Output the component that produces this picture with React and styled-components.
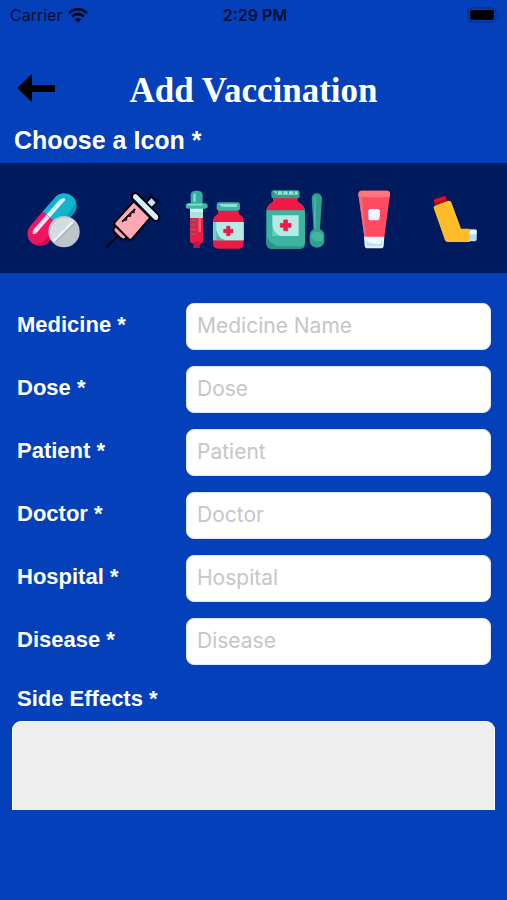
import React from "react";
import styled, { createGlobalStyle } from "styled-components";

const GlobalStyle = createGlobalStyle`
  *, *::before, *::after { box-sizing: border-box; }
  body { margin: 0; background: #0340b9; }
`;

const Screen = styled.div`
  min-height: 100vh;
  background: #0340b9;
  color: #fff;
  font-family: "Liberation Sans", Arial, sans-serif;
`;

const StatusBar = styled.div`
  display: grid;
  grid-template-columns: 1fr auto 1fr;
  align-items: center;
  height: 30px;
  padding: 0 7px 0 10px;
  color: #001036;
  font: 400 16px/20px Inter, sans-serif;
`;

const Carrier = styled.span`
  display: flex;
  align-items: center;
  gap: 6px;
`;

const Clock = styled.time`
  font-weight: 600;
  font-size: 16px;
`;

const BatteryIcon = styled.svg`
  justify-self: end;
`;

const Header = styled.header`
  display: grid;
  grid-template-columns: 48px 1fr 48px;
  align-items: center;
  height: 60px;
  margin: 28px 0 2px;
  padding: 0 12px;
`;

const BackButton = styled.button`
  display: flex;
  justify-content: center;
  align-items: center;
  height: 44px;
  padding: 0;
  border: 0;
  background: none;
  cursor: pointer;
`;

const Title = styled.h1`
  margin: 0;
  padding-top: 6px;
  text-align: center;
  white-space: nowrap;
  font: 700 35px/40px "Liberation Serif", serif;
`;

const SectionTitle = styled.h2`
  margin: 0;
  padding: 4px 14px 7px;
  font-weight: 700;
  font-size: 25px;
  line-height: 32px;
`;

const IconStrip = styled.div`
  display: grid;
  grid-template-columns: repeat(6, 1fr);
  height: 110px;
  padding: 0 13px;
  background: #001a5e;
`;

const IconButton = styled.button`
  display: flex;
  align-items: center;
  justify-content: center;
  padding: 0;
  border: 0;
  background: none;
  cursor: pointer;

  svg {
    width: 60px;
    height: 60px;
    overflow: visible;
  }
`;

const Form = styled.form`
  display: flex;
  flex-direction: column;
  gap: 16px;
  padding: 30px 16px 0;
`;

const Field = styled.div`
  display: grid;
  grid-template-columns: 1fr 305px;
  align-items: center;
`;

const Label = styled.label`
  padding: 0 0 4px 1px;
  font-weight: 700;
  font-size: 22px;
  line-height: 28px;
`;

const TextInput = styled.input`
  width: 100%;
  height: 47px;
  padding: 0 10px 2px;
  border: 1px solid #dfe6f5;
  border-radius: 8px;
  background: #fff;
  color: #111;
  font: 400 21px/28px Inter, sans-serif;

  &::placeholder { color: #c6c6c8; opacity: 1; }
`;

const Notes = styled.div`
  display: flex;
  flex-direction: column;
  gap: 4px;
  margin: 4px -4px 0;

  label { padding-left: 5px; }
`;

const TextArea = styled.textarea`
  display: block;
  width: 100%;
  height: 89px;
  padding: 10px;
  border: 1px solid #fff;
  border-bottom: 0;
  border-radius: 9px 9px 0 0;
  background: #eee;
  color: #111;
  font: 400 21px/28px Inter, sans-serif;
  resize: none;
`;

const Wifi = () => (
  <svg width="20" height="15" viewBox="0 0 60 45" fill="none" stroke="#000a22" strokeWidth="8" aria-hidden="true">
    <path d="M3 15Q30-8 57 15" />
    <path d="M12 26Q30 10 48 26" />
    <path d="M20 34Q30 26 40 34L30 44Z" fill="#000a22" stroke="none" />
  </svg>
);

const Battery = () => (
  <BatteryIcon width="33" height="16" viewBox="0 0 33 16" role="img" aria-label="Battery full">
    <rect x="1" y="1" width="28" height="14" rx="4" fill="none" stroke="#022d83" strokeWidth="1" />
    <rect x="3" y="3" width="24" height="10" rx="2" fill="#000" />
    <path d="M31 6q2 2 0 4z" fill="#022d83" />
  </BatteryIcon>
);

const Arrow = () => (
  <svg width="38" height="28" viewBox="0 0 38 28" aria-hidden="true">
    <path d="M0 14 15 0V11H38V18H15V28Z" fill="#000" />
  </svg>
);

const Pills = () => (
  <svg viewBox="39 24 180 180" aria-hidden="true">
    <g transform="translate(126 119) rotate(41) scale(1.12)">
      <path d="M-33 0V-50A33 33 0 0 1 33-50V0Z" fill="#11b4cd" />
      <path d="M-33 0V50A33 33 0 0 0 33 50V0Z" fill="#ef1561" />
      <path d="M16-78A33 33 0 0 1 33-50V0H22V-48Q22-66 16-78Z" fill="#079bb9" />
      <path d="M22 0H33V50A33 33 0 0 1 0 83Q22 73 22 50Z" fill="#c90d55" />
      <path d="M-20-1V-49Q-19-61-12-65Q-7-67-8-56V-1Z" fill="#d8faff" />
      <path d="M-20 0H-8V53Q-10 64-15 62Q-20 59-20 50Z" fill="#ffd8e7" />
    </g>
    <circle cx="162" cy="155" r="47" fill="#bcc5cc" />
    <path d="M130 187A46 46 0 0 1 194 122Z" fill="#d5dce0" />
    <path d="M133 181 187 127" stroke="#f3f6f7" strokeWidth="6" strokeLinecap="round" />
    <path d="M138 185 193 131" stroke="#9caab4" strokeWidth="3" />
  </svg>
);

const Syringe = () => (
  <svg viewBox="279 24 180 180" stroke="#02040c" strokeWidth="6" strokeLinejoin="round" strokeLinecap="round" aria-hidden="true">
    <path d="M290 201 323 167" fill="none" />
    <path d="M311 145q7-9 15-2l20 20q7 8-1 14-8 4-14-3l-17-17q-6-6-3-12Z" fill="#ff9daf" />
    <path d="m371 64 50 49-56 65q-4 3-8 0l-43-43q-3-4 0-8Z" fill="#ffa9b6" />
    <path d="M407 69 424 50 441 68 424 85Z" fill="#c5e4fa" />
    <path d="M418 39 454 72" strokeWidth="3" />
    <path d="M369 42q8-6 15 1l61 61q7 8 0 16-8 7-15 0l-62-63q-6-7 1-15Z" fill="#d8effd" />
    <path d="M375 88 337 125" fill="none" strokeWidth="4" />
    <path d="M373 88V99L363 97 362 110 351 108 350 121 338 122Z" strokeWidth="2" fill="#2b1724" />
  </svg>
);

const Cross = ({ x, y, size }) => (
  <g transform={`translate(${x} ${y}) scale(${size})`}>
    <path d="M-5-14H5V-5H14V5H5V14H-5V5H-14V-5H-5Z" fill="#ef1945" stroke="#ef1945" strokeWidth="2" strokeLinejoin="round" />
  </g>
);

const DropperBottle = () => (
  <svg viewBox="39 24 180 180" aria-hidden="true">
    <path d="M62 72V46Q62 33 75 32H84Q98 33 98 46V72Z" fill="#35ad9f" />
    <path d="M70 65V48Q70 40 77 40V65Z" fill="#8be0d4" />
    <path d="M60 84H99V184Q99 189 89 191V203H71V191Q60 189 60 184Z" fill="#ef1945" />
    <path d="M60 84H99V114H60Z" fill="#a6e5df" />
    <path d="M60 84H99V96H60Z" fill="#d1f2eb" />
    <path d="M71 185H89V203H71Z" fill="#b91748" />
    <path d="M85 114H93V156H85Z" fill="#ff6278" />
    <path d="M62 121H78M62 135H78M62 149H78M62 162H78" stroke="#60737e" strokeWidth="5" />
    <rect x="47" y="70" width="66" height="16" rx="8" fill="#3dbaa7" />
    <path d="M55 74H95" stroke="#86ddcf" strokeWidth="5" strokeLinecap="round" />
    <path d="M144 91H206V102Q221 109 221 123V190Q221 206 206 206H145Q129 206 129 190V123Q129 109 144 102Z" fill="#ef1945" />
    <path d="M129 126H221V181H129Z" fill="#72cfc3" />
    <path d="M139 126H221V181H166Q140 176 139 151Z" fill="#b5ebe4" />
    <path d="M139 150Q145 175 166 181H139Z" fill="#55b9af" />
    <rect x="140" y="67" width="70" height="25" rx="7" fill="#3bb5a4" />
    <path d="M149 72H201V81H165Q149 81 149 72Z" fill="#8fe1d3" />
    <Cross x={175} y={153} size={1} />
  </svg>
);

const BottleSpoon = () => (
  <svg viewBox="281 24 180 180" aria-hidden="true">
    <path d="M309 54H381V65Q404 75 404 95V188Q404 206 386 206H306Q288 206 288 188V95Q288 75 309 65Z" fill="#3bb59f" />
    <path d="M309 54H381V65Q400 73 403 91H289Q292 73 309 65Z" fill="#ef1945" />
    <path d="M288 167Q300 197 333 199H404Q400 206 386 206H306Q288 206 288 188Z" fill="#299786" />
    <path d="M306 106H385V168H327Q306 158 306 133Z" fill="#b5ebe4" />
    <path d="M306 133Q307 157 330 168H306Z" fill="#6bcabb" />
    <rect x="303" y="31" width="85" height="24" rx="6" fill="#329f91" />
    <path d="M310 34H382V44H320Z" fill="#98e2d4" />
    <path d="M321 33V43M337 33V43M354 33V43M371 33V43" stroke="#329f91" strokeWidth="4" />
    <Cross x={346} y={136} size={1.15} />
    <path d="M424 54Q426 40 439 40Q452 40 455 54L449 148Q462 153 462 165V184Q460 202 440 203Q420 202 418 184V165Q419 153 430 148Z" fill="#2f9f90" />
    <path d="M434 50V146" stroke="#49b9a8" strokeWidth="5" />
    <path d="M423 166Q425 154 440 155Q456 156 458 166V183Q440 188 423 177Z" fill="#42b3a1" />
  </svg>
);

const Tube = () => (
  <svg viewBox="12 24 180 180" aria-hidden="true">
    <path d="M55 43Q55 33 65 32H141Q151 33 150 43L133 171H73Z" fill="#ff4b5f" />
    <path d="M55 43Q55 33 65 32H141Q151 33 150 43L149 52H56Z" fill="#ff7580" />
    <path d="M66 52 78 171H73L57 52Z" fill="#ff6674" />
    <rect x="85" y="87" width="34" height="34" rx="8" fill="#d8ecff" />
    <path d="M91 87H111Q119 87 119 95V108Q113 117 98 115Q85 112 85 98V95Q85 87 91 87Z" fill="#f0f8ff" />
    <path d="M72 170H133L131 197Q130 205 122 205H83Q75 205 74 197Z" fill="#e1f1ff" />
    <path d="M80 182Q88 190 126 184V198H80Z" fill="#bddfff" />
    <path d="M83 178H123V191Q95 193 83 185Z" fill="#f2f9ff" />
  </svg>
);

const Inhaler = () => (
  <svg viewBox="252 24 180 180" aria-hidden="true">
    <path d="M281 63Q281 58 286 56L311 48Q316 47 318 52L326 71 289 84Z" fill="#b90f18" />
    <path d="M282 61 315 50 318 56 284 68Z" fill="#da1924" />
    <path d="M281 84Q280 79 285 77L324 63Q331 61 334 67L363 146H389V186H323Q317 186 315 181Z" fill="#ffbd29" />
    <path d="M389 148H406Q410 148 410 153V178Q410 184 404 184H387Z" fill="#b7dcfb" />
    <path d="M389 151H410V163H388Z" fill="#e2f3ff" />
  </svg>
);

const icons = [
  { name: "Pills", Icon: Pills },
  { name: "Syringe", Icon: Syringe },
  { name: "Dropper", Icon: DropperBottle },
  { name: "Syrup", Icon: BottleSpoon },
  { name: "Ointment", Icon: Tube },
  { name: "Inhaler", Icon: Inhaler },
];

const fields = [
  { id: "medicine", label: "Medicine *", placeholder: "Medicine Name" },
  { id: "dose", label: "Dose *", placeholder: "Dose" },
  { id: "patient", label: "Patient *", placeholder: "Patient" },
  { id: "doctor", label: "Doctor *", placeholder: "Doctor" },
  { id: "hospital", label: "Hospital *", placeholder: "Hospital" },
  { id: "disease", label: "Disease *", placeholder: "Disease" },
];

export default function App() {
  return (
    <>
      <GlobalStyle />
      <Screen>
        <StatusBar>
          <Carrier>Carrier <Wifi /></Carrier>
          <Clock>2:29 PM</Clock>
          <Battery />
        </StatusBar>
        <Header>
          <BackButton type="button" aria-label="Back"><Arrow /></BackButton>
          <Title>Add Vaccination</Title>
        </Header>
        <SectionTitle>Choose a Icon *</SectionTitle>
        <IconStrip>
          {icons.map(({ name, Icon }) => (
            <IconButton key={name} type="button" aria-label={name}><Icon /></IconButton>
          ))}
        </IconStrip>
        <Form>
          {fields.map(({ id, label, placeholder }) => (
            <Field key={id}>
              <Label htmlFor={id}>{label}</Label>
              <TextInput id={id} type="text" placeholder={placeholder} />
            </Field>
          ))}
          <Notes>
            <Label htmlFor="side-effects">Side Effects *</Label>
            <TextArea id="side-effects" />
          </Notes>
        </Form>
      </Screen>
    </>
  );
}
